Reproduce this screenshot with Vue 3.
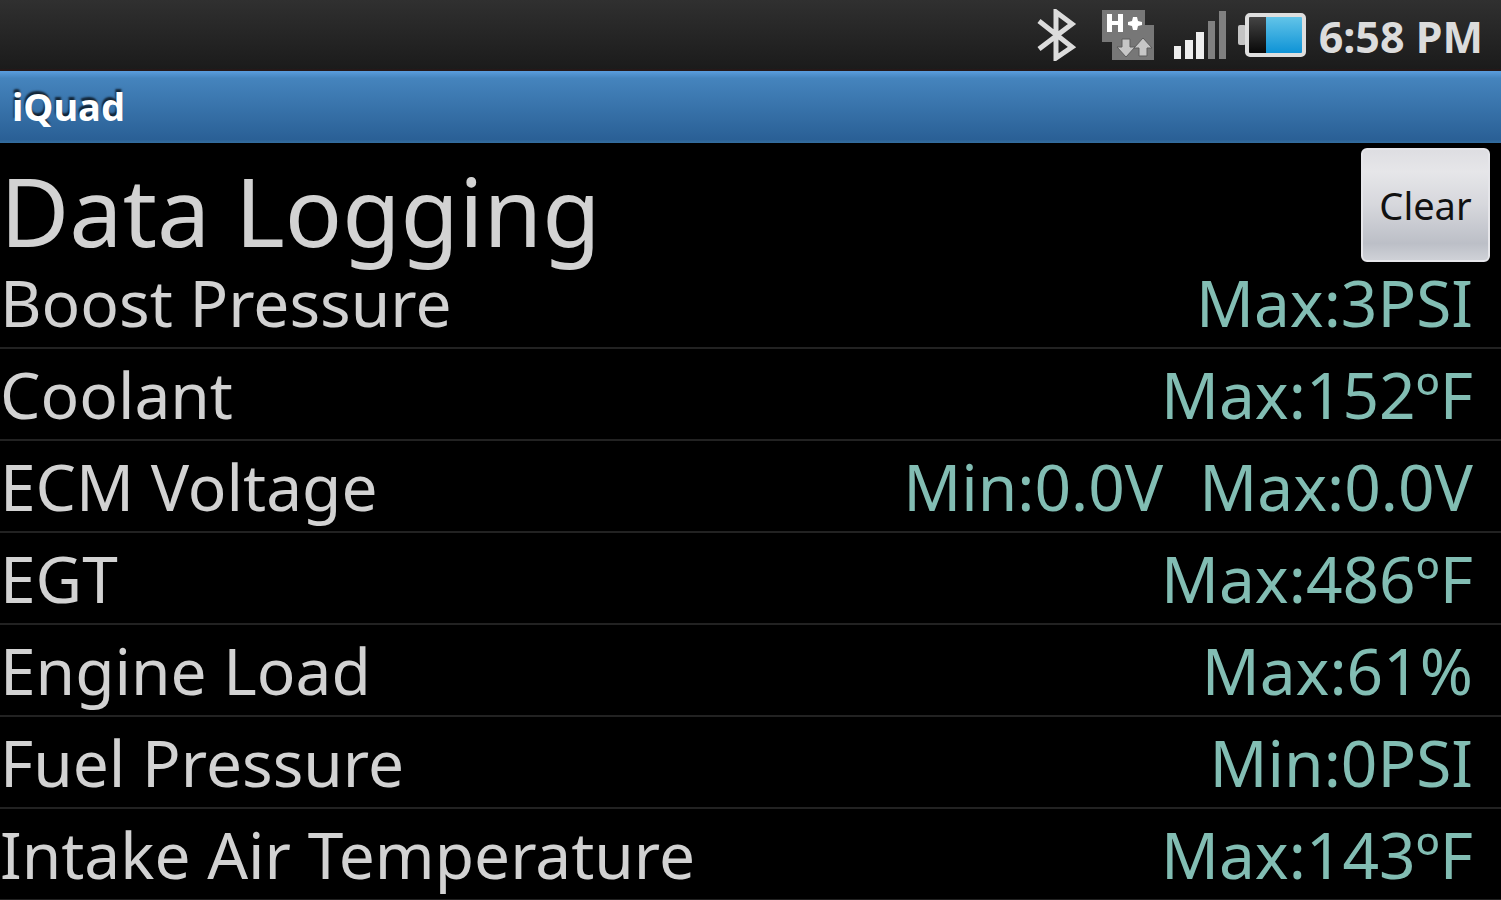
<template>
  <div class="screen">
    <div class="status-bar">
      <svg class="status-bar__bluetooth" viewBox="0 0 40 52" width="40" height="52" aria-hidden="true">
        <path d="M2 12 L35 38 L19 49 V3 L35 15 L2 40" />
      </svg>

      <svg class="status-bar__network" viewBox="0 0 54 52" width="54" height="52" aria-hidden="true">
        <path class="plate" d="M1 1 H44 V16 H53 V51 H11 V33 H1 Z" />
        <path class="bright" d="M6 5 h5 v7 h6 v-7 h5 v18 h-5 v-7 h-6 v7 h-5 z" />
        <path class="bright" d="M32 8 h4 l1 4 l4 1 v3 l-4 1 l-1 4 h-4 l-1 -4 l-4 -1 v-3 l4 -1 z" />
        <path class="arrow" d="M21 30 h8 v8 h5 l-9 10 l-9 -10 h5 z" />
        <path class="arrow" d="M38 47 h8 v-8 h5 l-9 -10 l-9 10 h5 z" />
      </svg>

      <svg class="status-bar__signal" viewBox="0 0 54 50" width="54" height="50" aria-hidden="true">
        <rect class="on" x="1" y="36" width="7" height="13" />
        <rect class="on" x="12" y="30" width="8" height="19" />
        <rect class="on" x="23" y="22" width="8" height="27" />
        <rect class="off" x="35" y="11" width="7" height="38" />
        <rect class="off" x="46" y="1" width="7" height="48" />
      </svg>

      <svg class="status-bar__battery" viewBox="0 0 70 44" width="70" height="44" aria-hidden="true">
        <defs>
          <linearGradient id="charge" x1="0" y1="0" x2="0" y2="1">
            <stop offset="0" stop-color="#62c4e8" />
            <stop offset="1" stop-color="#0e93d6" />
          </linearGradient>
          <linearGradient id="empty" x1="0" y1="0" x2="0" y2="1">
            <stop offset="0" stop-color="#484848" />
            <stop offset="1" stop-color="#050505" />
          </linearGradient>
        </defs>
        <rect x="1" y="12" width="8" height="20" rx="2" fill="#c4c4c4" />
        <rect x="10" y="2" width="58" height="40" rx="3" fill="url(#empty)" />
        <rect x="29" y="4" width="36" height="36" fill="url(#charge)" />
        <rect x="10" y="2" width="57" height="40" rx="3" fill="none" stroke="#dedede" stroke-width="4" />
      </svg>

      <span class="status-bar__time">6:58 PM</span>
    </div>

    <div class="title-bar">iQuad</div>

    <main>
      <header class="heading">
        <h1 class="heading__title">Data Logging</h1>
        <button type="button" class="heading__clear" @click="clearReadings">Clear</button>
      </header>

      <table class="readings">
        <tbody>
          <tr v-for="item in readings" :key="item.name">
            <th scope="row">{{ item.name }}</th>
            <td>
              <span v-for="value in item.values" :key="value" class="readings__value">{{ value }}</span>
            </td>
          </tr>
        </tbody>
      </table>
    </main>
  </div>
</template>

<script setup>
import { ref } from 'vue';

const readings = ref([
  { name: 'Boost Pressure', values: ['Max:3PSI'] },
  { name: 'Coolant', values: ['Max:152ºF'] },
  { name: 'ECM Voltage', values: ['Min:0.0V', 'Max:0.0V'] },
  { name: 'EGT', values: ['Max:486ºF'] },
  { name: 'Engine Load', values: ['Max:61%'] },
  { name: 'Fuel Pressure', values: ['Min:0PSI'] },
  { name: 'Intake Air Temperature', values: ['Max:143ºF'] }
]);

const clearReadings = () => {
  readings.value = readings.value.map((item) => ({ ...item, values: [] }));
};
</script>

<style>
body {
  margin: 0;
  background: #000;
}
</style>

<style scoped>
.screen {
  background: #000;
  color: #d2d2d2;
  font-family: "Noto Sans", "Open Sans", sans-serif;
}

.status-bar {
  display: flex;
  align-items: center;
  justify-content: flex-end;
  height: 69px;
  padding-right: 18px;
  background: linear-gradient(#303030, #1b1b1b);
  border-bottom: 2px solid #251818;
}

.status-bar__bluetooth {
  margin-right: 24px;
}

.status-bar__bluetooth path {
  fill: none;
  stroke: #dcdcdc;
  stroke-width: 5;
}

.status-bar__network {
  margin-right: 18px;
}

.plate {
  fill: #777;
}

.bright {
  fill: #fff;
}

.arrow {
  fill: #c6c6c6;
  stroke: #5c5c5c;
  stroke-width: 1;
}

.status-bar__signal {
  margin-right: 10px;
}

.on {
  fill: #eee;
}

.off {
  fill: #808080;
}

.status-bar__battery {
  margin-right: 12px;
}

.status-bar__time {
  padding-top: 4px;
  color: #dcdcdc;
  font-size: 43px;
  font-weight: 700;
  line-height: 64px;
}

.title-bar {
  height: 72px;
  padding-left: 12px;
  box-sizing: border-box;
  background: linear-gradient(#5a9ddd, #4584bd 10%, #2a6096 95%, #346d9f);
  color: #fff;
  font-size: 38px;
  font-weight: 700;
  line-height: 70px;
  text-shadow: -1px -3px 2px rgba(0, 0, 0, 0.7);
}

/* The first row tucks in under the descenders of the title */
.heading {
  display: flex;
  align-items: flex-start;
  justify-content: space-between;
  margin-bottom: -15px;
  padding: 5px 11px 0 0;
}

.heading__title {
  margin: 0;
  font-size: 95px;
  font-weight: 400;
  line-height: 124px;
}

.heading__clear {
  width: 129px;
  height: 114px;
  padding: 0;
  border: 2px solid #e6e6ea;
  border-radius: 6px;
  background: linear-gradient(#dedee2, #e6e6e9 20%, #d6d7dc 50%, #bcbfc7 85%, #cfd1d7);
  color: #111;
  font-family: inherit;
  font-size: 38px;
  cursor: pointer;
}

.heading__clear:active {
  background: #f0a830;
}

.readings {
  width: 100%;
  border-collapse: separate;
  border-spacing: 0;
  font-size: 64px;
  line-height: 88px;
  white-space: nowrap;
}

.readings th,
.readings td {
  height: 88px;
  padding: 2px 0 0;
  border-bottom: 2px solid #222;
  font-weight: 400;
}

.readings th {
  text-align: left;
}

.readings td {
  padding-right: 28px;
  color: #82bdb3;
  text-align: right;
}

.readings__value + .readings__value {
  margin-left: 36px;
}
</style>
